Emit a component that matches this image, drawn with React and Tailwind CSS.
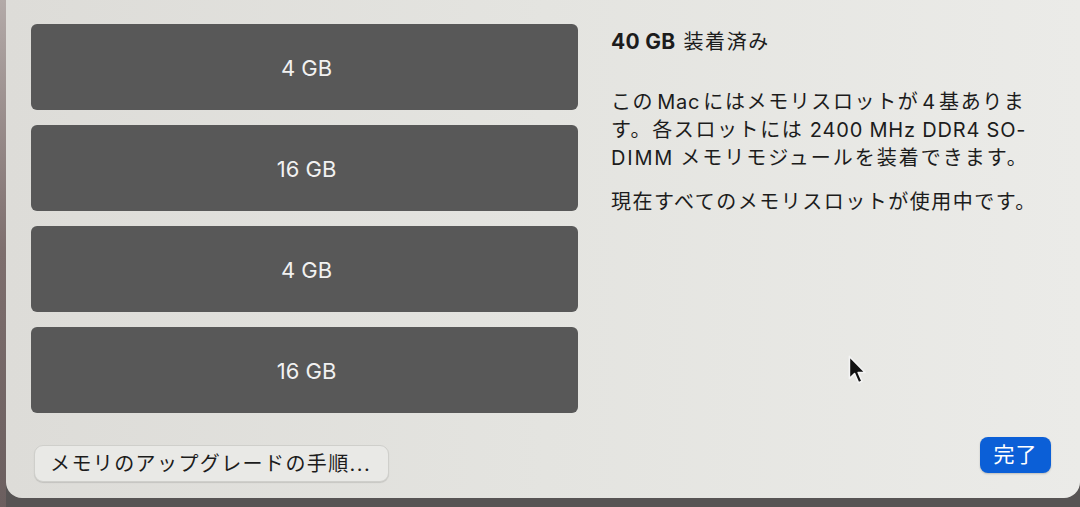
import React from 'react';

const slots = ['4 GB', '16 GB', '4 GB', '16 GB'];

const font = { fontFamily: '"Inter", "Noto Sans CJK JP", sans-serif' };

// latin run set inside japanese text, with a little breathing room around it
function L({ children, gap = true, wide = false }) {
  return (
    <span className={(gap ? 'mx-[3px] ' : '') + (wide ? 'tracking-[1.8px]' : 'tracking-[0.8px]')}>
      {children}
    </span>
  );
}

function Cursor() {
  // mac-style arrow pointer, white rim around a black body
  return (
    <svg width="20" height="30" viewBox="0 0 14 21" className="absolute left-[848px] top-[355px]">
      <path
        d="M1 1 L1 16.5 L4.6 13 L7.4 19.4 L9.8 18.4 L7.1 12.2 L12 12.2 Z"
        fill="#111"
        stroke="#f4f4f4"
        strokeWidth="1.1"
        strokeLinejoin="round"
      />
    </svg>
  );
}

export default function App() {
  return (
    <div
      className="relative flex w-[1080px] h-[507px] bg-[#575454] overflow-hidden"
      style={font}
    >
      {/* desktop behind the window edge */}
      <div className="w-[6px] h-full bg-gradient-to-b from-[#b3aaa8] via-[#7d6e6d] to-[#6b5f5f]" />

      {/* sheet */}
      <div className="flex flex-1 h-[498px] rounded-bl-[16px] rounded-br-[16px] bg-gradient-to-r from-[#dddcd8] via-[#e4e4e0] to-[#ebebe8] text-[#1c1c1c]">
        {/* memory slots */}
        <div className="flex flex-col pl-[25px] pt-[24px] w-[572px]">
          <div className="flex flex-col gap-[15px]">
            {slots.map((s, i) => (
              <div
                key={i}
                className="flex items-center justify-center h-[86px] w-[547px] rounded-[6px] bg-[#585858] text-[22px] text-[#f1f1f1] pl-[4px] pt-[3px]"
              >
                {s}
              </div>
            ))}
          </div>
          <button className="mt-[32px] ml-[3px] flex items-center h-[37px] w-[355px] rounded-[9px] border border-[#cfcfcb] bg-[#e9e9e6] shadow-[0_1px_1px_rgba(0,0,0,0.12)] px-[15px] text-[20px] text-[#1c1c1c] tracking-[1.4px]">
            メモリのアップグレードの手順...
          </button>
        </div>

        {/* description */}
        <div className="flex flex-col flex-1 pl-[33px] pr-[29px] pt-[28px] pb-[25px]">
          <div className="text-[20px] leading-[28px] tracking-[1.6px]">
            <span className="font-bold text-[21px] tracking-[0.3px] mr-[8px]">40 GB</span>装着済み
          </div>
          <p className="mt-[32px] text-[20px] leading-[28px] tracking-[1.6px]">
            <span className="block">
              この<L>Mac</L>にはメモリスロットが<L>4</L>基ありま
            </span>
            <span className="block">
              す。各スロットには<L gap={false}>&nbsp;2400 MHz DDR4 SO-</L>
            </span>
            <span className="block">
              <L gap={false} wide>DIMM</L>
              <span className="ml-[6px] tracking-[2px]">メモリモジュールを装着できます。</span>
            </span>
          </p>
          <p className="mt-[16px] text-[20px] leading-[28px] tracking-[1.5px]">
            現在すべてのメモリスロットが使用中です。
          </p>
          <div className="mt-auto flex justify-end">
            <button className="h-[36px] w-[71px] rounded-[8px] bg-[#0b5fd7] text-[21px] text-white tracking-[1px] shadow-[0_1px_2px_rgba(0,0,0,0.2)]">
              完了
            </button>
          </div>
        </div>
      </div>

      <Cursor />
    </div>
  );
}
